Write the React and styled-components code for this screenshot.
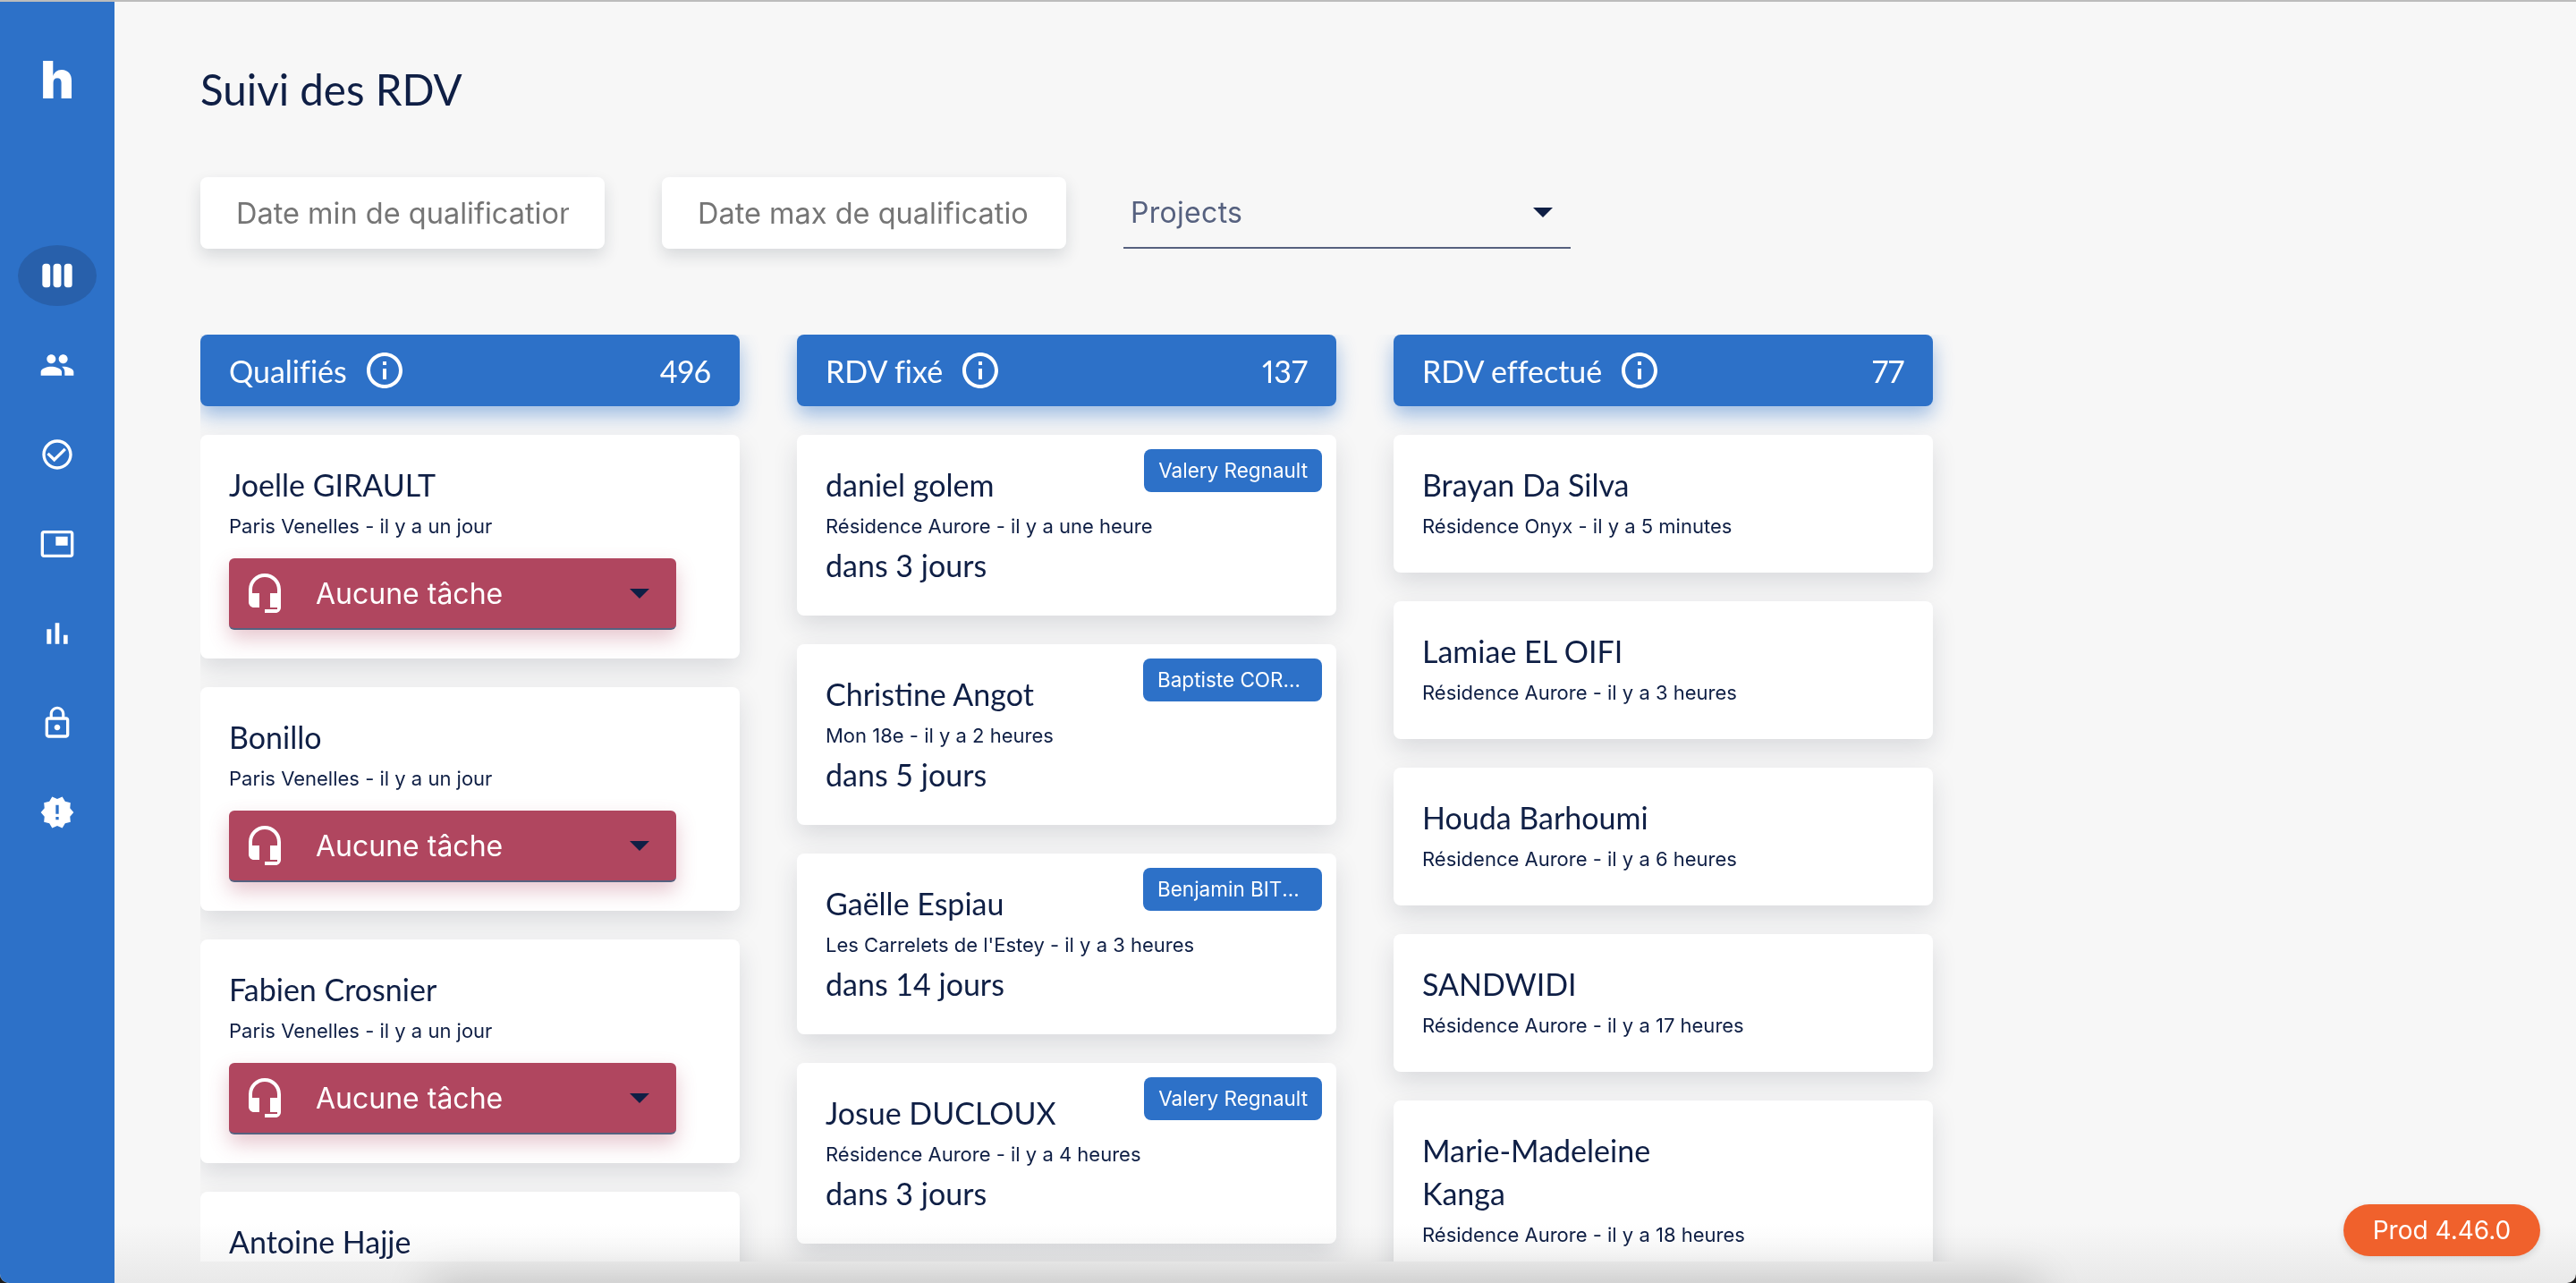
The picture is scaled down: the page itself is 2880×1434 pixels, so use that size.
import React from 'react';
import styled, { createGlobalStyle } from 'styled-components';
import {
  MdViewWeek,
  MdPeople,
  MdCheckCircleOutline,
  MdPictureInPicture,
  MdLockOutline,
  MdNewReleases,
  MdInfoOutline,
  MdHeadsetMic,
} from 'react-icons/md';

const navy = '#0f1f45';
const blue = '#2d71c8';
const slate = '#56617f';
const heading = '"Lato", "Noto Sans", sans-serif';
const body = '"Inter", "Liberation Sans", sans-serif';

const GlobalStyle = createGlobalStyle`
  html, body { margin: 0; height: 100%; background: #1c1c1c; }
  #root { height: 100%; }
  * { box-sizing: border-box; }
`;

const Shell = styled.div`
  position: relative;
  display: flex;
  height: 100vh;
  overflow: hidden;
  border-top: 2px solid #bcbcbc;
  border-radius: 0 0 10px 10px;
  background: #f7f7f7;
`;

const Sidebar = styled.nav`
  flex: 0 0 128px;
  display: flex;
  flex-direction: column;
  align-items: center;
  background: ${blue};
  color: #fff;
`;

const Logo = styled.div`
  height: 272px;
  padding-top: 53px;
  font-family: ${body};
  font-weight: 900;
  font-size: 58px;
  line-height: 68px;
`;

const NavItem = styled.div`
  width: 88px;
  height: 68px;
  margin-bottom: 32px;
  display: flex;
  align-items: center;
  justify-content: center;
  border-radius: 50%;
  background: ${({ $active }) => ($active ? '#2860ab' : 'transparent')};
  font-size: 40px;
`;

const Main = styled.main`
  flex: 1;
  min-width: 0;
  display: flex;
  flex-direction: column;
  padding: 0 0 24px 96px;
`;

const Title = styled.h1`
  margin: 0;
  height: 196px;
  padding-top: 70px;
  font-family: ${heading};
  font-weight: 400;
  font-size: 47.5px;
  line-height: 56px;
  color: ${navy};
`;

const Filters = styled.div`
  display: flex;
  align-items: flex-start;
  gap: 64px;
  height: 176px;
`;

const DateInput = styled.input`
  width: 452px;
  height: 80px;
  padding: 0 40px;
  border: none;
  border-radius: 8px;
  background: #fff;
  box-shadow: 0 8px 18px rgba(30, 40, 60, 0.14);
  font-family: ${body};
  font-size: 32.5px;
  outline: none;

  &::placeholder {
    color: #757575;
    opacity: 1;
  }
`;

const ProjectSelect = styled.div`
  width: 500px;
  height: 80px;
  padding: 0 20px 0 8px;
  display: flex;
  align-items: center;
  justify-content: space-between;
  border-bottom: 2px solid ${slate};
  font-family: ${body};
  font-size: 32px;
  letter-spacing: 0.3px;
  color: ${slate};
`;

const Caret = styled.span`
  width: 0;
  height: 0;
  border-left: 11px solid transparent;
  border-right: 11px solid transparent;
  border-top: 11px solid ${navy};
`;

const Board = styled.div`
  flex: 1;
  min-height: 0;
  overflow: hidden;
  display: grid;
  grid-template-columns: repeat(3, 603px);
  align-items: start;
  column-gap: 64px;
`;

const Column = styled.section`
  display: flex;
  flex-direction: column;
  gap: 32px;
`;

const ColumnHeader = styled.header`
  height: 80px;
  padding: 0 32px;
  display: flex;
  align-items: center;
  gap: 18px;
  border-radius: 8px;
  background: ${blue};
  box-shadow: 0 10px 22px rgba(45, 113, 200, 0.45);
  color: #fff;
  font-family: ${heading};
  font-size: 34px;
  font-variant-ligatures: none;
`;

const Count = styled.span`
  margin-left: auto;
  font-variant-numeric: proportional-nums;
`;

const Card = styled.article`
  position: relative;
  padding: 32px 32px ${({ $pad }) => $pad}px;
  border-radius: 8px;
  background: #fff;
  box-shadow: 0 12px 28px rgba(30, 40, 60, 0.13);
  color: ${navy};
`;

const Name = styled.div`
  max-width: 340px;
  font-family: ${heading};
  font-size: 34px;
  line-height: 48px;
`;

const Place = styled.div`
  margin-top: 6px;
  font-family: ${body};
  font-size: 22px;
  line-height: 32px;
`;

const Due = styled.div`
  margin-top: 8px;
  font-family: ${heading};
  font-size: 34px;
  line-height: 40px;
`;

const Owner = styled.span`
  position: absolute;
  top: 16px;
  right: 16px;
  max-width: 200px;
  height: 48px;
  padding: 0 16px;
  overflow: hidden;
  white-space: nowrap;
  text-overflow: ellipsis;
  border-radius: 8px;
  background: ${blue};
  color: #fff;
  font-family: ${body};
  font-size: 22.5px;
  line-height: 48px;
`;

const TaskSelect = styled.div`
  width: 500px;
  height: 80px;
  margin-top: 20px;
  padding: 0 30px 0 16px;
  display: flex;
  align-items: center;
  border-radius: 6px;
  border-bottom: 2px solid ${slate};
  background: #b0465f;
  box-shadow: 0 10px 22px rgba(176, 70, 95, 0.3);
  color: #fff;
  font-family: ${body};
  font-size: 32px;
`;

const TaskIcon = styled(MdHeadsetMic)`
  flex: none;
  font-size: 48px;
  margin-right: 33px;
`;

const TaskCaret = styled(Caret)`
  margin-left: auto;
`;

const BottomFade = styled.div`
  position: absolute;
  left: 128px;
  right: 0;
  bottom: 0;
  height: 66px;
  background: linear-gradient(#fff, #f1f1f1);
  mix-blend-mode: multiply;
  pointer-events: none;
`;

const BottomShade = styled.div`
  position: absolute;
  left: 480px;
  right: 600px;
  bottom: -30px;
  height: 30px;
  box-shadow: 0 0 50px rgba(0, 0, 0, 0.24);
`;

const Version = styled.div`
  position: absolute;
  right: 40px;
  bottom: 30px;
  width: 220px;
  height: 58px;
  border-radius: 29px;
  background: #f0612c;
  box-shadow: 0 3px 8px rgba(0, 0, 0, 0.12);
  color: #fff;
  font-family: ${body};
  font-size: 28px;
  line-height: 58px;
  text-align: center;
`;

// thin-barred variant of the material bar chart, the one in the package is heavier
const BarChartIcon = () => (
  <svg width="1em" height="1em" viewBox="0 0 24 24" fill="currentColor">
    <path d="M5 9.2h3V19H5zM10.6 5h2.8v14h-2.8zm5.6 8H19v6h-2.8z" />
  </svg>
);

const navIcons = [
  MdViewWeek,
  MdPeople,
  MdCheckCircleOutline,
  MdPictureInPicture,
  BarChartIcon,
  MdLockOutline,
  MdNewReleases,
];

const columns = [
  {
    title: 'Qualifiés',
    count: 496,
    cards: [
      { name: 'Joelle GIRAULT', place: 'Paris Venelles - il y a un jour', task: true },
      { name: 'Bonillo', place: 'Paris Venelles - il y a un jour', task: true },
      { name: 'Fabien Crosnier', place: 'Paris Venelles - il y a un jour', task: true },
      { name: 'Antoine Hajje', place: 'Paris Venelles - il y a un jour', task: true },
    ],
  },
  {
    title: 'RDV fixé',
    count: 137,
    cards: [
      { name: 'daniel golem', place: 'Résidence Aurore - il y a une heure', due: 'dans 3 jours', owner: 'Valery Regnault' },
      { name: 'Christine Angot', place: 'Mon 18e - il y a 2 heures', due: 'dans 5 jours', owner: 'Baptiste CORNET' },
      { name: 'Gaëlle Espiau', place: "Les Carrelets de l'Estey - il y a 3 heures", due: 'dans 14 jours', owner: 'Benjamin BITTON' },
      { name: 'Josue DUCLOUX', place: 'Résidence Aurore - il y a 4 heures', due: 'dans 3 jours', owner: 'Valery Regnault' },
    ],
  },
  {
    title: 'RDV effectué',
    count: 77,
    cards: [
      { name: 'Brayan Da Silva', place: 'Résidence Onyx - il y a 5 minutes' },
      { name: 'Lamiae EL OIFI', place: 'Résidence Aurore - il y a 3 heures' },
      { name: 'Houda Barhoumi', place: 'Résidence Aurore - il y a 6 heures' },
      { name: 'SANDWIDI', place: 'Résidence Aurore - il y a 17 heures' },
      { name: 'Marie-Madeleine Kanga', place: 'Résidence Aurore - il y a 18 heures' },
    ],
  },
];

const App = () => (
  <Shell>
    <GlobalStyle />
    <Sidebar>
      <Logo>h</Logo>
      {navIcons.map((Icon, i) => (
        <NavItem key={i} $active={i === 0}>
          <Icon />
        </NavItem>
      ))}
    </Sidebar>
    <Main>
      <Title>Suivi des RDV</Title>
      <Filters>
        <DateInput placeholder="Date min de qualification" />
        <DateInput placeholder="Date max de qualification" />
        <ProjectSelect>
          Projects
          <Caret />
        </ProjectSelect>
      </Filters>
      <Board>
        {columns.map((column) => (
          <Column key={column.title}>
            <ColumnHeader>
              {column.title}
              <MdInfoOutline size={48} />
              <Count>{column.count}</Count>
            </ColumnHeader>
            {column.cards.map((card) => (
              <Card key={card.name} $pad={card.task ? 32 : 36}>
                {card.owner && <Owner>{card.owner}</Owner>}
                <Name>{card.name}</Name>
                <Place>{card.place}</Place>
                {card.due && <Due>{card.due}</Due>}
                {card.task && (
                  <TaskSelect>
                    <TaskIcon />
                    Aucune tâche
                    <TaskCaret />
                  </TaskSelect>
                )}
              </Card>
            ))}
          </Column>
        ))}
      </Board>
    </Main>
    <BottomFade />
    <BottomShade />
    <Version>Prod 4.46.0</Version>
  </Shell>
);

export default App;
